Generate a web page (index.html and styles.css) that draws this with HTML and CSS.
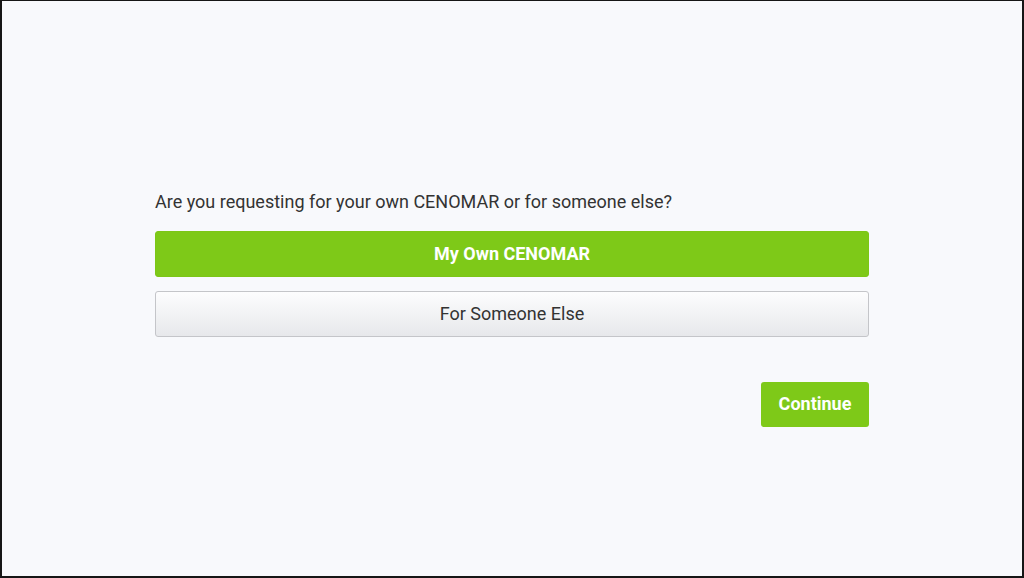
FILE: index.html
```html
<!DOCTYPE html>
<html lang="en">
  <head>
    <meta charset="UTF-8" />
    <title>CENOMAR Request</title>
    <link rel="stylesheet" href="styles.css">
  </head>
  <body>
    <div class="frame">
      <div class="form">
        <p class="question">Are you requesting for your own CENOMAR or for someone else?</p>
        <button class="choice choice-active">My Own CENOMAR</button>
        <button class="choice">For Someone Else</button>
        <div class="actions">
          <button class="continue">Continue</button>
        </div>
      </div>
    </div>
  </body>
</html>
```

FILE: styles.css
```css
body {
  margin: 0;
  font-family: Roboto, "Liberation Sans", sans-serif;
  background-color: #f8f9fc;
  color: #333;
}
.frame {
  box-sizing: border-box;
  height: 578px;
  border: 2px solid #161616;
  border-top-width: 1px;
  padding-top: 190px;
}
.form {
  width: 714px;
  margin: 0 auto;
  display: flex;
  flex-direction: column;
}
.question {
  margin: 0 0 18px 0;
  font-size: 18px;
  line-height: 22px;
  color: #333;
}
.choice {
  height: 46px;
  margin-bottom: 14px;
  padding-bottom: 3px;
  border: 1px solid #c4c5c9;
  border-radius: 3px;
  background: linear-gradient(#fdfdfe, #e7e8eb);
  font-family: inherit;
  font-size: 18px;
  color: #333;
  cursor: pointer;
}
.choice-active {
  border-color: #7cc617;
  background: #7ec918;
  color: #fff;
  font-weight: bold;
}
.actions {
  display: flex;
  justify-content: flex-end;
  margin-top: 31px;
}
.continue {
  width: 108px;
  height: 45px;
  padding-bottom: 3px;
  border: none;
  border-radius: 3px;
  background-color: #7ec918;
  color: #fff;
  font-family: inherit;
  font-size: 18px;
  font-weight: bold;
  cursor: pointer;
}
```
